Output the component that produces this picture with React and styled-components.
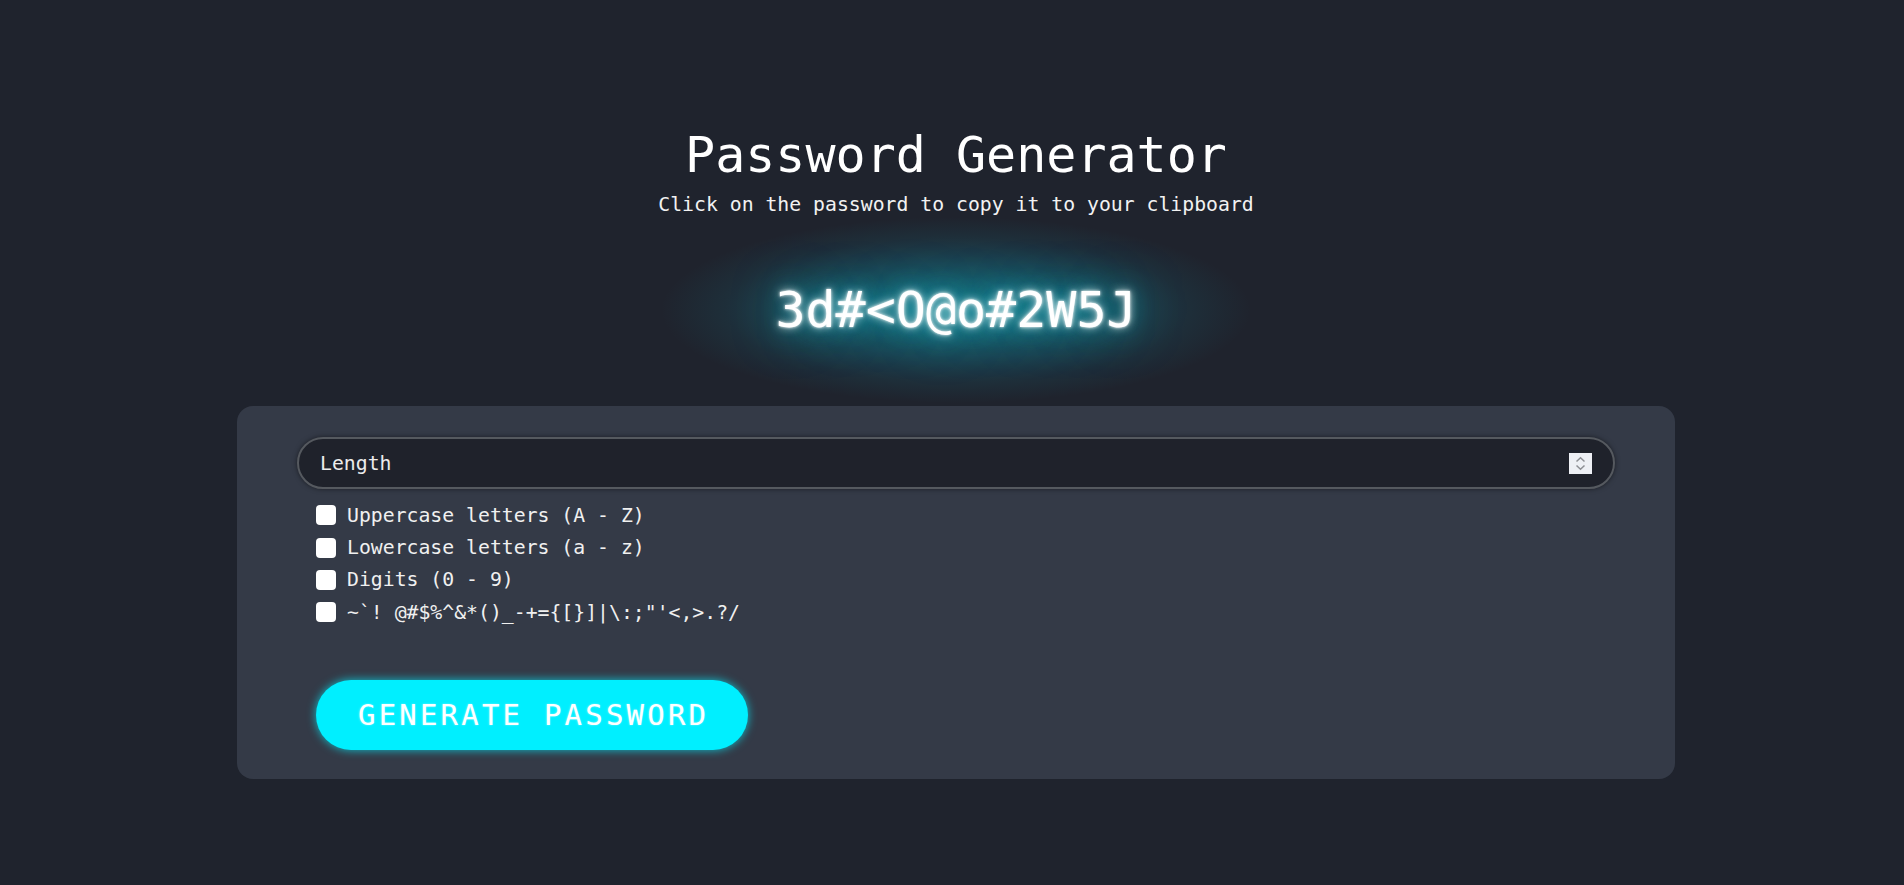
import React, { useState } from "react";
import styled, { createGlobalStyle } from "styled-components";

const Global = createGlobalStyle`
  html, body { margin: 0; padding: 0; background: #1f232d; }
  body { font-family: "DejaVu Sans Mono", "Liberation Mono", monospace; color: #fff; }
  * { box-sizing: border-box; }
`;

const Page = styled.div`
  min-height: 885px;
  padding: 125px 0 0 8px;
  display: flex;
  flex-direction: column;
  align-items: center;
  background: #1f232d;
`;

const Title = styled.h1`
  margin: 0;
  font-size: 50px;
  line-height: 60px;
  font-weight: 400;
  color: #ffffff;
`;

const Subtitle = styled.p`
  margin: 8px 0 0;
  font-size: 19.8px;
  line-height: 24px;
  color: #f2f2f2;
`;

const Password = styled.div`
  margin-top: 0;
  width: 590px;
  padding: 63px 0;
  text-align: center;
  font-size: 50px;
  line-height: 60px;
  color: #ffffff;
  cursor: pointer;
  background: radial-gradient(
    ellipse closest-side at 50% 50%,
    rgba(20, 165, 180, 0.5) 0%,
    rgba(20, 160, 178, 0.42) 30%,
    rgba(20, 155, 175, 0.26) 55%,
    rgba(20, 150, 170, 0.1) 78%,
    rgba(20, 150, 170, 0) 100%
  );
  text-shadow:
    0 0 3px #ffffff,
    0 0 8px rgba(255, 255, 255, 0.85),
    0 0 25px rgba(0, 220, 240, 0.6),
    0 0 50px rgba(0, 200, 225, 0.6);
`;

const Panel = styled.section`
  margin-top: 3px;
  width: 1438px;
  background: #343a47;
  border-radius: 16px;
  padding: 31px 60px 29px;
  display: flex;
  flex-direction: column;
`;

const Field = styled.label`
  height: 52px;
  display: flex;
  align-items: center;
  border: 2px solid #55595f;
  border-radius: 26px;
  background: #1f222b;
  padding: 0 21px 0 19px;
  box-shadow: 0 0 5px rgba(0, 0, 0, 0.5);
`;

const LengthInput = styled.input`
  flex: 1;
  min-width: 0;
  border: none;
  outline: none;
  background: transparent;
  color: #f0f0f0;
  font-family: inherit;
  font-size: 19.8px;
  &::placeholder { color: #ececec; }
  &::-webkit-inner-spin-button,
  &::-webkit-outer-spin-button { -webkit-appearance: none; margin: 0; }
`;

const Spinner = styled.span`
  width: 23px;
  height: 21px;
  background: #eef0f5;
  display: flex;
  align-items: center;
  justify-content: center;
`;

const Options = styled.div`
  margin-top: 10px;
  padding-left: 19px;
  display: flex;
  flex-direction: column;
`;

const Option = styled.label`
  height: 32.4px;
  display: flex;
  align-items: center;
  gap: 11px;
  font-size: 19.8px;
  color: #f0f0f0;
  white-space: pre;
`;

const Check = styled.input`
  appearance: none;
  -webkit-appearance: none;
  margin: 0;
  width: 20px;
  height: 20px;
  border-radius: 4px;
  background: #ffffff;
  flex: none;
`;

const Actions = styled.div`
  margin-top: 51px;
  padding-left: 19px;
  display: flex;
`;

const GenerateButton = styled.button`
  width: 432px;
  height: 70px;
  border: none;
  border-radius: 35px;
  background: #00efff;
  color: #ffffff;
  font-family: inherit;
  font-size: 29px;
  letter-spacing: 3.2px;
  text-indent: 3.2px;
  box-shadow: 0 0 10px rgba(0, 239, 255, 0.75);
  text-shadow: 0 0 2px rgba(255, 255, 255, 0.5);
  cursor: pointer;
`;

const options = [
  "Uppercase letters (A - Z)",
  "Lowercase letters (a - z)",
  "Digits (0 - 9)",
  "~`! @#$%^&*()_-+={[}]|\\:;\"'<,>.?/",
];

export default function App() {
  const [checked, setChecked] = useState([false, false, false, false]);
  return (
    <>
      <Global />
      <Page>
        <Title>Password Generator</Title>
        <Subtitle>Click on the password to copy it to your clipboard</Subtitle>
        <Password>3d#&lt;O@o#2W5J</Password>
        <Panel>
          <Field>
            <LengthInput type="number" placeholder="Length" />
            <Spinner>
              <svg width="11" height="15" viewBox="0 0 11 15" fill="none" stroke="#8d8f94" strokeWidth="1.5">
                <path d="M1.5 5.5 L5.5 1.8 L9.5 5.5" />
                <path d="M1.5 9.5 L5.5 13.2 L9.5 9.5" />
              </svg>
            </Spinner>
          </Field>
          <Options>
            {options.map((o, i) => (
              <Option key={i}>
                <Check
                  type="checkbox"
                  checked={checked[i]}
                  onChange={() =>
                    setChecked((c) => c.map((v, j) => (j === i ? !v : v)))
                  }
                />
                {o}
              </Option>
            ))}
          </Options>
          <Actions>
            <GenerateButton>GENERATE PASSWORD</GenerateButton>
          </Actions>
        </Panel>
      </Page>
    </>
  );
}
